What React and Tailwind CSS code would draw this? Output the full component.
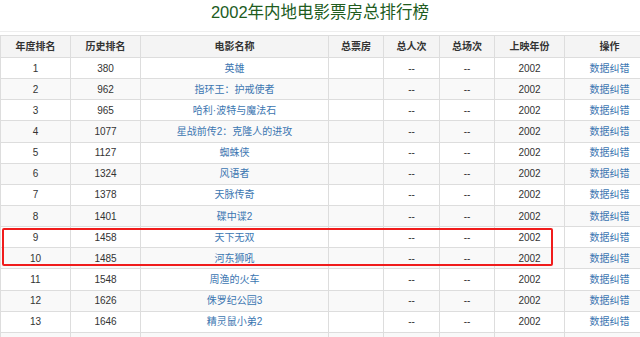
import React from "react";

const movies = [
  [1, 380, "英雄"],
  [2, 962, "指环王：护戒使者"],
  [3, 965, "哈利·波特与魔法石"],
  [4, 1077, "星战前传2：克隆人的进攻"],
  [5, 1127, "蜘蛛侠"],
  [6, 1324, "风语者"],
  [7, 1378, "天脉传奇"],
  [8, 1401, "碟中谍2"],
  [9, 1458, "天下无双"],
  [10, 1485, "河东狮吼"],
  [11, 1548, "周渔的火车"],
  [12, 1626, "侏罗纪公园3"],
  [13, 1646, "精灵鼠小弟2"],
];

const headers = ["年度排名", "历史排名", "电影名称", "总票房", "总人次", "总场次", "上映年份", "操作"];
const widths = ["w-[70px]", "w-[70px]", "w-[188px]", "w-[55px]", "w-[56px]", "w-[55px]", "w-[70px]", "w-[90px]"];

export default function App() {
  return (
    <div
      className="relative w-[640px] h-[337px] overflow-hidden bg-white text-[#333]"
      style={{ fontFamily: '"Liberation Sans", "Noto Sans CJK SC", sans-serif' }}
    >
      {/* Title */}
      <h1 className="h-[31px] flex items-center justify-center text-[16.5px] text-[#215c1e] pb-[6px]">
        2002年内地电影票房总排行榜
      </h1>
      <div className="h-px bg-[#eeeeee]" />

      <table className="mt-[3px] table-fixed border-collapse w-[654px] text-[10px]">
        <colgroup>
          {widths.map((w, i) => (
            <col key={i} className={w} />
          ))}
        </colgroup>
        <thead>
          <tr className="h-[22px] bg-[#f4f4f4]">
            {headers.map((h) => (
              <th key={h} className="border border-[#dddddd] font-bold text-center p-0">
                {h}
              </th>
            ))}
          </tr>
        </thead>
        <tbody>
          {movies.map(([rank, hist, name]) => (
            <tr key={rank} className={`h-[21.15px] ${rank % 2 === 0 ? "bg-[#f9f9f9]" : "bg-white"}`}>
              <td className="border border-[#dddddd] text-center p-0">{rank}</td>
              <td className="border border-[#dddddd] text-center p-0">{hist}</td>
              <td className="border border-[#dddddd] text-center p-0 text-[#3b76b1]">{name}</td>
              <td className="border border-[#dddddd] p-0"></td>
              <td className="border border-[#dddddd] text-center p-0">--</td>
              <td className="border border-[#dddddd] text-center p-0">--</td>
              <td className="border border-[#dddddd] text-center p-0">2002</td>
              <td className="border border-[#dddddd] text-center p-0 text-[#3b76b1]">数据纠错</td>
            </tr>
          ))}
          <tr className="h-[21.15px] bg-[#f9f9f9]">
            {widths.map((_, i) => (
              <td key={i} className="border border-[#dddddd] p-0"></td>
            ))}
          </tr>
        </tbody>
      </table>

      {/* Highlight annotation */}
      <div className="absolute left-[2px] top-[228px] w-[551px] h-[38px] border-2 border-[#f01c1c] rounded-[2px]" />
    </div>
  );
}
